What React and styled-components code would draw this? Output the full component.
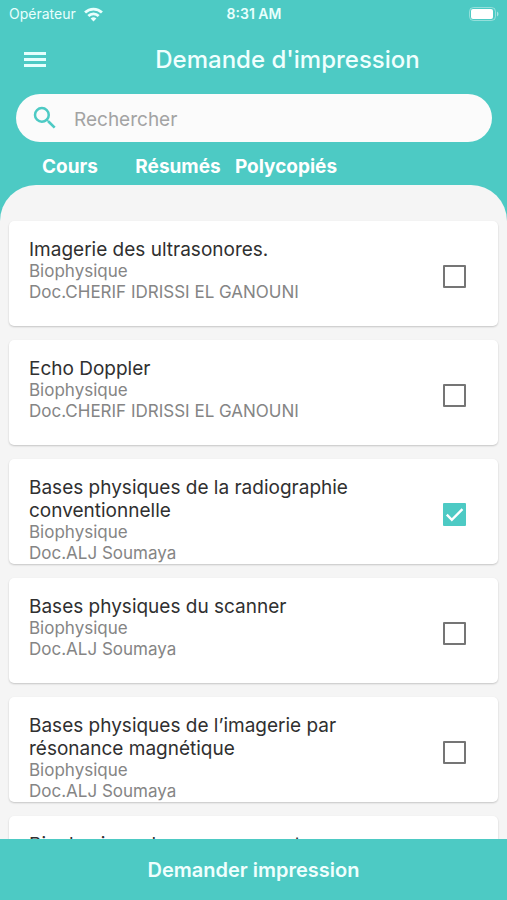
import React, { useState } from 'react';
import styled, { createGlobalStyle } from 'styled-components';

const TEAL = '#4dcac4';

const GlobalStyle = createGlobalStyle`
  * { box-sizing: border-box; }
  html, body, #root { height: 100%; }
  body {
    margin: 0;
    background: ${TEAL};
    font-family: Inter, "Liberation Sans", sans-serif;
  }
`;

const Screen = styled.div`
  display: flex;
  flex-direction: column;
  height: 100%;
  overflow: hidden;
  background: ${TEAL};
`;

const StatusBar = styled.div`
  display: grid;
  grid-template-columns: 1fr auto 1fr;
  align-items: center;
  height: 28px;
  padding: 0 8px 0 9px;
  color: #e9fffd;
  font-size: 14px;
  line-height: 20px;
`;

const Carrier = styled.span`
  display: flex;
  align-items: center;
  gap: 8px;
`;

const Clock = styled.time`
  font-weight: 600;
`;

const BatteryIcon = styled.svg`
  justify-self: end;
`;

const AppBar = styled.header`
  display: flex;
  align-items: center;
  height: 64px;
  padding: 0 16px;
`;

const IconButton = styled.button`
  display: flex;
  align-items: center;
  justify-content: center;
  width: 38px;
  height: 48px;
  padding: 0;
  border: 0;
  background: none;
  color: #e6fffd;
`;

const Title = styled.h1`
  flex: 1;
  margin: 0 0 0 30px;
  color: #f0fffe;
  font-size: 24px;
  font-weight: 500;
  line-height: 32px;
  text-align: center;
`;

const SearchBox = styled.label`
  display: flex;
  align-items: center;
  gap: 14px;
  height: 48px;
  margin: 2px 15px 0 16px;
  padding: 0 14px;
  border-radius: 24px;
  background: #fbfbfb;
  color: ${TEAL};
`;

const SearchInput = styled.input`
  flex: 1;
  min-width: 0;
  padding: 4px 0 0;
  border: 0;
  outline: 0;
  background: none;
  color: #333;
  font: 400 19px/24px Inter, "Liberation Sans", sans-serif;
  &::placeholder { color: #a3a3a3; opacity: 1; }
`;

const Tabs = styled.nav`
  display: flex;
  margin: 0 16px;
`;

const Tab = styled.button`
  flex: 0 0 108px;
  height: 43px;
  padding: 6px 0 0;
  border: 0;
  background: none;
  color: #fff;
  font: 700 19px/24px Inter, "Liberation Sans", sans-serif;
  white-space: nowrap;
`;

const Sheet = styled.main`
  flex: 1;
  min-height: 0;
  overflow: hidden;
  padding: 36px 9px 0;
  border-radius: 36px 36px 0 0;
  background: #f5f5f5;
`;

const CourseList = styled.ul`
  display: flex;
  flex-direction: column;
  gap: 14px;
  margin: 0;
  padding: 0;
  list-style: none;
`;

const CourseCard = styled.li`
  flex: none;
  height: 105px;
  border-radius: 5px;
  background: #fff;
  box-shadow: 0 1px 2px rgba(0, 0, 0, 0.2);
`;

const CourseLabel = styled.label`
  display: flex;
  align-items: center;
  height: 100%;
  padding: 0 32px 0 20px;
`;

const CourseText = styled.span`
  flex: 1;
  align-self: flex-start;
  display: flex;
  flex-direction: column;
  padding: 17px 70px 0 0;
`;

const CourseName = styled.span`
  color: #303030;
  font-size: 19px;
  line-height: 23px;
`;

const CourseMeta = styled.span`
  color: #858585;
  font-size: 17px;
  line-height: 21px;
`;

const Checkbox = styled.input`
  appearance: none;
  flex: none;
  width: 23px;
  height: 23px;
  margin: 6px 0 0;
  border: 2px solid #757575;
  border-radius: 1px;
  &:checked {
    border: 0;
    background: ${TEAL} url("data:image/svg+xml,%3Csvg xmlns='http://www.w3.org/2000/svg' viewBox='0 0 24 24'%3E%3Cpath d='M4 12.2l5.2 5.3L20.3 6.4' fill='none' stroke='white' stroke-width='2.5'/%3E%3C/svg%3E") center / 23px 23px no-repeat;
  }
`;

const RequestButton = styled.button`
  flex: none;
  height: 61px;
  padding: 0;
  border: 0;
  background: ${TEAL};
  color: #f0fffe;
  font: 600 20px/24px Inter, "Liberation Sans", sans-serif;
`;

const COURSES = [
  { name: 'Imagerie des ultrasonores.', subject: 'Biophysique', teacher: 'Doc.CHERIF IDRISSI EL GANOUNI' },
  { name: 'Echo Doppler', subject: 'Biophysique', teacher: 'Doc.CHERIF IDRISSI EL GANOUNI' },
  { name: 'Bases physiques de la radiographie conventionnelle', subject: 'Biophysique', teacher: 'Doc.ALJ Soumaya' },
  { name: 'Bases physiques du scanner', subject: 'Biophysique', teacher: 'Doc.ALJ Soumaya' },
  { name: 'Bases physiques de l’imagerie par résonance magnétique', subject: 'Biophysique', teacher: 'Doc.ALJ Soumaya' },
  { name: 'Biophysique des rayonnements', subject: 'Biophysique', teacher: 'Doc.ALJ Soumaya' },
];

function Wifi() {
  return (
    <svg width="19" height="15" viewBox="0 0 18 14" fill="none" stroke="currentColor" strokeWidth="2.6" aria-hidden="true">
      <path d="M1 5.2a11.5 11.5 0 0 1 16 0" />
      <path d="M4.1 8.5a7 7 0 0 1 9.8 0" />
      <path d="M9 13.6L6.3 10.8a3.9 3.9 0 0 1 5.4 0z" fill="currentColor" stroke="none" />
    </svg>
  );
}

function Battery() {
  return (
    <BatteryIcon width="30" height="14" viewBox="0 0 30 14" aria-hidden="true">
      <rect x="0.5" y="0.5" width="26" height="13" rx="4" fill="none" stroke="#fff" strokeOpacity="0.4" />
      <rect x="2" y="2" width="22" height="10" rx="2" fill="#fff" />
      <path d="M28 4.5v5c2-1 2-4 0-5z" fill="#fff" fillOpacity="0.5" />
    </BatteryIcon>
  );
}

export default function App() {
  const [selected, setSelected] = useState([2]);
  const toggle = (index) =>
    setSelected((now) => (now.includes(index) ? now.filter((i) => i !== index) : [...now, index]));

  return (
    <Screen>
      <GlobalStyle />
      <StatusBar>
        <Carrier>Opérateur <Wifi /></Carrier>
        <Clock>8:31 AM</Clock>
        <Battery />
      </StatusBar>
      <AppBar>
        <IconButton type="button" aria-label="Menu">
          <svg width="24" height="16" viewBox="0 0 24 16" fill="currentColor" aria-hidden="true">
            <path d="M1 0h22v3H1zM1 6h22v3H1zM1 12h22v3H1z" />
          </svg>
        </IconButton>
        <Title>Demande d'impression</Title>
      </AppBar>
      <SearchBox>
        <svg width="30" height="30" viewBox="0 0 24 24" fill="currentColor" aria-hidden="true">
          <path d="M15.5 14h-.79l-.28-.27A6.47 6.47 0 0 0 16 9.5 6.5 6.5 0 1 0 9.5 16c1.61 0 3.09-.59 4.23-1.57l.27.28v.79l5 4.99L20.49 19l-4.99-5zm-6 0a4.5 4.5 0 1 1 0-9 4.5 4.5 0 0 1 0 9z" />
        </svg>
        <SearchInput type="search" placeholder="Rechercher" aria-label="Rechercher" />
      </SearchBox>
      <Tabs>
        <Tab type="button">Cours</Tab>
        <Tab type="button">Résumés</Tab>
        <Tab type="button">Polycopiés</Tab>
      </Tabs>
      <Sheet>
        <CourseList>
          {COURSES.map((course, index) => (
            <CourseCard key={course.name}>
              <CourseLabel>
                <CourseText>
                  <CourseName>{course.name}</CourseName>
                  <CourseMeta>{course.subject}</CourseMeta>
                  <CourseMeta>{course.teacher}</CourseMeta>
                </CourseText>
                <Checkbox type="checkbox" checked={selected.includes(index)} onChange={() => toggle(index)} />
              </CourseLabel>
            </CourseCard>
          ))}
        </CourseList>
      </Sheet>
      <RequestButton type="button">Demander impression</RequestButton>
    </Screen>
  );
}
